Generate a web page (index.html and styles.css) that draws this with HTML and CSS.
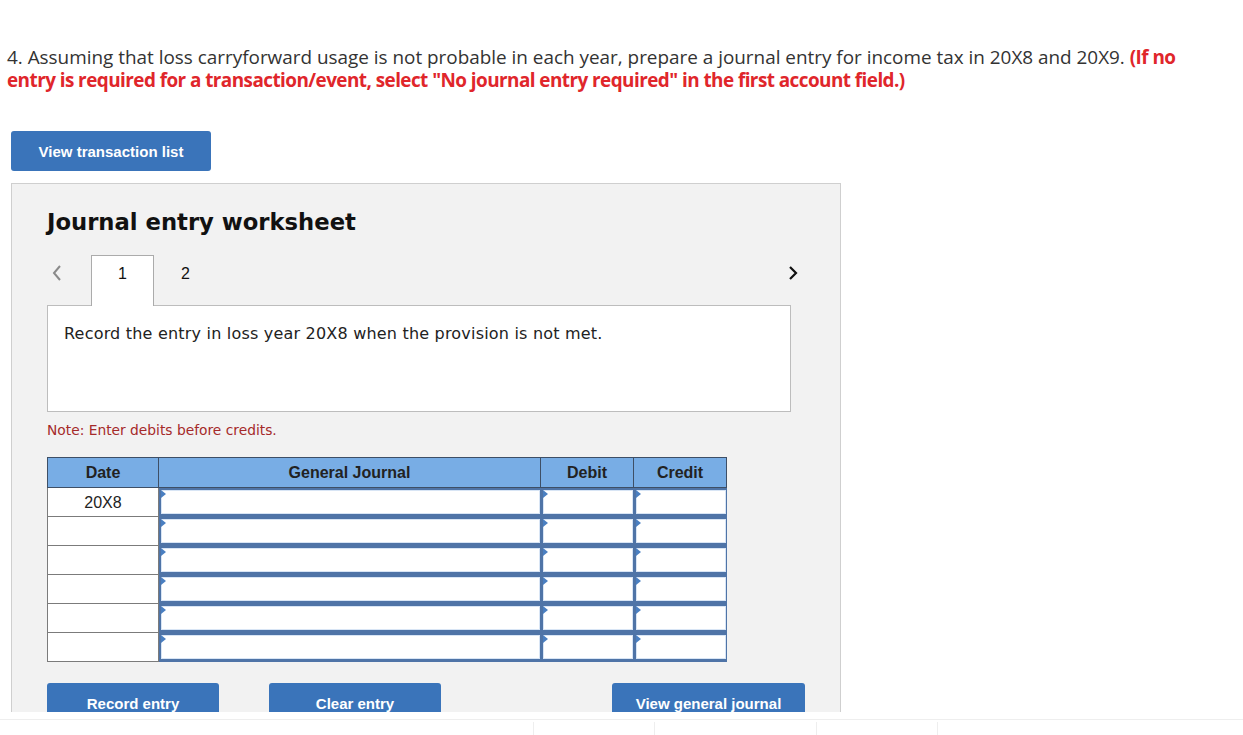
FILE: index.html
```html
<!DOCTYPE html>
<html lang="en">
<head>
<meta charset="utf-8">
<title>Journal entry worksheet</title>
<link rel="stylesheet" href="styles.css">
</head>
<body>
<div class="viewport">
  <p class="question">4. Assuming that loss carryforward usage is not probable in each year, prepare a journal entry for income tax in 20X8 and 20X9. <strong class="hint">(If no</strong> <strong class="hint">entry is required for a transaction/event, select "No journal entry required" in the first account field.)</strong></p>

  <button class="btn btn-list" type="button">View transaction list</button>

  <section class="panel">
    <h2 class="panel-title">Journal entry worksheet</h2>

    <div class="tabs">
      <span class="chev chev-left">
        <svg width="12" height="18" viewBox="0 0 12 18"><path d="M9 2 L3 9 L9 16" fill="none" stroke="#8a8a8a" stroke-width="2"/></svg>
      </span>
      <span class="tab tab-active">1</span>
      <span class="tab">2</span>
      <span class="chev chev-right">
        <svg width="12" height="18" viewBox="0 0 12 18"><path d="M3 3 L9 9 L3 15" fill="none" stroke="#111" stroke-width="2.2"/></svg>
      </span>
    </div>

    <div class="prompt">Record the entry in loss year 20X8 when the provision is not met.</div>

    <p class="note">Note: Enter debits before credits.</p>

    <table class="journal">
      <thead>
        <tr>
          <th class="c-date">Date</th>
          <th class="c-gj">General Journal</th>
          <th class="c-amt">Debit</th>
          <th class="c-amt">Credit</th>
        </tr>
      </thead>
      <tbody>
        <tr><td class="date">20X8</td><td class="in"><div class="field"></div></td><td class="in"><div class="field"></div></td><td class="in"><div class="field"></div></td></tr>
        <tr><td class="date"></td><td class="in"><div class="field"></div></td><td class="in"><div class="field"></div></td><td class="in"><div class="field"></div></td></tr>
        <tr><td class="date"></td><td class="in"><div class="field"></div></td><td class="in"><div class="field"></div></td><td class="in"><div class="field"></div></td></tr>
        <tr><td class="date"></td><td class="in"><div class="field"></div></td><td class="in"><div class="field"></div></td><td class="in"><div class="field"></div></td></tr>
        <tr><td class="date"></td><td class="in"><div class="field"></div></td><td class="in"><div class="field"></div></td><td class="in"><div class="field"></div></td></tr>
        <tr><td class="date"></td><td class="in"><div class="field"></div></td><td class="in"><div class="field"></div></td><td class="in"><div class="field"></div></td></tr>
      </tbody>
    </table>

    <div class="actions">
      <button class="btn btn-act btn-record" type="button">Record entry</button>
      <button class="btn btn-act btn-clear" type="button">Clear entry</button>
      <button class="btn btn-act btn-view" type="button">View general journal</button>
    </div>
  </section>
</div>
<div class="footer">
  <span class="fcell f1"></span>
  <span class="fcell f2"></span>
  <span class="fcell f3"></span>
</div>
</body>
</html>
```

FILE: styles.css
```css
html, body {
  margin: 0;
  padding: 0;
  background: #fff;
}
body {
  font-family: "Liberation Sans", Arial, sans-serif;
  color: #222;
}
.viewport {
  height: 712px;
  overflow: hidden;
}
.question {
  margin: 0;
  padding: 46px 0 0 7px;
  width: 1200px;
  font-family: "Open Sans", Lato, sans-serif;
  font-size: 18.9px;
  line-height: 23px;
  color: #333;
}
.hint {
  color: #e0262b;
  font-weight: 700;
  letter-spacing: -0.55px;
}
.btn {
  border: 0;
  background: #3a74ba;
  color: #fff;
  font-family: "Liberation Sans", Arial, sans-serif;
  font-weight: 700;
  font-size: 15px;
  border-radius: 3px;
  cursor: pointer;
  padding: 0;
}
.btn-list {
  display: block;
  margin: 39px 0 0 11px;
  width: 200px;
  height: 40px;
  text-align: center;
}
.panel {
  margin: 12px 0 0 11px;
  width: 830px;
  height: 600px;
  border: 1px solid #cfcfcf;
  background: #f2f2f2;
  padding: 23px 35px 0 35px;
  box-sizing: border-box;
}
.panel-title {
  margin: 0;
  font-family: "DejaVu Sans", Verdana, sans-serif;
  font-weight: 700;
  font-size: 22.7px;
  line-height: 30px;
  color: #111;
}
.tabs {
  margin-top: 18px;
  display: flex;
  align-items: stretch;
  height: 50px;
  width: 758px;
  position: relative;
  z-index: 1;
}
.chev {
  display: flex;
  align-items: center;
  height: 36px;
}
.chev-left {
  width: 44px;
  padding-left: 4px;
  box-sizing: border-box;
}
.chev-right {
  margin-left: auto;
  margin-right: 6px;
}
.tab {
  width: 63px;
  box-sizing: border-box;
  text-align: center;
  font-family: "Liberation Sans", Arial, sans-serif;
  font-size: 16px;
  line-height: 36px;
  color: #111;
  border: 1px solid transparent;
  border-bottom: 0;
}
.tab-active {
  background: #fff;
  border-color: #ababab;
  height: 51px;
}
.prompt {
  width: 744px;
  height: 107px;
  box-sizing: border-box;
  background: #fff;
  border: 1px solid #bdbdbd;
  padding: 18px 16px;
  font-family: "DejaVu Sans", Verdana, sans-serif;
  font-size: 16px;
  letter-spacing: 0.2px;
  line-height: 20px;
  color: #222;
}
.note {
  margin: 9px 0 0;
  font-family: "DejaVu Sans", Verdana, sans-serif;
  font-size: 13.8px;
  line-height: 18px;
  color: #a52a2a;
}
.journal {
  margin-top: 18px;
  border-collapse: collapse;
  table-layout: fixed;
  width: 679px;
}
.journal th {
  background: #78ade5;
  border: 1px solid #3e4f66;
  height: 30px;
  padding: 0;
  font-family: "Liberation Sans", Arial, sans-serif;
  font-weight: 700;
  font-size: 16px;
  color: #222;
  box-sizing: border-box;
}
.c-date { width: 111px; }
.c-gj { width: 382px; }
.c-amt { width: 93px; }
.journal td {
  height: 29px;
  padding: 0;
  box-sizing: border-box;
}
.journal td.date {
  background: #fff;
  border: 1px solid #7b7b7b;
  text-align: center;
  vertical-align: top;
  padding-top: 6px;
  font-size: 16px;
  color: #222;
}
.journal td.in {
  background: #4f74a7;
  border: 0;
  padding: 1px 1px 2px 2px;
}
.field {
  position: relative;
  height: 24px;
  background: #fff;
  border: 1px solid #d8e5f5;
  box-sizing: border-box;
}
.field::before {
  content: "";
  position: absolute;
  left: -1px;
  top: -1px;
  border-left: 5px solid #4a7fc1;
  border-top: 4px solid transparent;
  border-bottom: 4px solid transparent;
}
.actions {
  margin-top: 21px;
  display: flex;
  width: 758px;
}
.btn-act {
  height: 40px;
  border-radius: 3px 3px 0 0;
}
.btn-record { width: 172px; }
.btn-clear { width: 172px; margin-left: 50px; }
.btn-view { width: 193px; margin-left: auto; }
.footer {
  margin-top: 7px;
  border-top: 1px solid #eeeeee;
  display: flex;
  padding-left: 533px;
  padding-top: 2px;
  height: 20px;
}
.fcell {
  border-left: 1px solid #eeeeee;
  height: 20px;
}
.f1 { width: 120px; }
.f2 { width: 161px; }
.f3 { width: 120px; border-right: 1px solid #eeeeee; }
```
